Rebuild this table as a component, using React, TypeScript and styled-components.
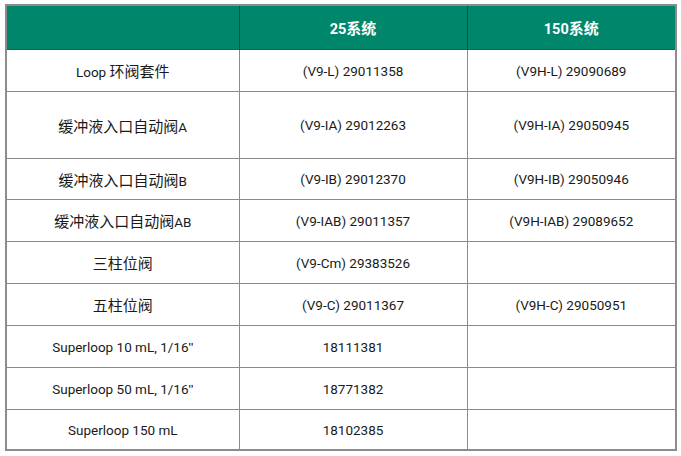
import React from "react";
import styled, { createGlobalStyle } from "styled-components";

const Global = createGlobalStyle`
  html, body { margin: 0; padding: 0; background: #ffffff; }
  body { font-family: Roboto, "Liberation Sans", "Noto Sans CJK SC", sans-serif; }
`;

const Page = styled.div`
  padding: 4px 0 0 5px;
`;

const Table = styled.table`
  border-collapse: collapse;
  table-layout: fixed;
  width: 670px;
  border: 2px solid #8c8c8c;
  color: #1a1a1a;
  font-family: Roboto, "Liberation Sans", "Noto Sans CJK SC", sans-serif;
  font-size: 13.5px;
`;

const HeadCell = styled.th`
  background: #00866a;
  color: #ffffff;
  font-weight: 700;
  font-size: 14.5px;
  text-align: center;
  vertical-align: middle;
  padding: 0;
  border-top: 2px solid #8c8c8c;
  border-bottom: 1.5px solid #2f5a4c;
  & + & { border-left: 1.5px solid #24463b; }
`;

const Row = styled.tr<{ $h: number }>`
  height: ${(p) => p.$h}px;
`;

const Cell = styled.td`
  text-align: center;
  vertical-align: middle;
  padding: 1px 0 0 0;
  border: 1.5px solid #8a8a8a;
  white-space: nowrap;
`;

const Zh = styled.span`
  font-family: "Noto Sans CJK SC", sans-serif;
  font-size: 15px;
`;

const Num = styled.span`
  font-family: Roboto, "Liberation Sans", sans-serif;
`;

const Quote = styled.span`
  font-family: "Liberation Sans", sans-serif;
`;

type RowData = { h: number; name: React.ReactNode; a: string; b: string };

const rows: RowData[] = [
  { h: 42, name: <>Loop <Zh>环阀套件</Zh></>, a: "(V9-L) 29011358", b: "(V9H-L) 29090689" },
  { h: 67, name: <><Zh>缓冲液入口自动阀</Zh>A</>, a: "(V9-IA) 29012263", b: "(V9H-IA) 29050945" },
  { h: 41, name: <><Zh>缓冲液入口自动阀</Zh>B</>, a: "(V9-IB) 29012370", b: "(V9H-IB) 29050946" },
  { h: 42, name: <><Zh>缓冲液入口自动阀</Zh>AB</>, a: "(V9-IAB) 29011357", b: "(V9H-IAB) 29089652" },
  { h: 42, name: <Zh>三柱位阀</Zh>, a: "(V9-Cm) 29383526", b: "" },
  { h: 42, name: <Zh>五柱位阀</Zh>, a: "(V9-C) 29011367", b: "(V9H-C) 29050951" },
  { h: 42, name: <>Superloop 10 mL, 1/16<Quote>"</Quote></>, a: "18111381", b: "" },
  { h: 42, name: <>Superloop 50 mL, 1/16<Quote>"</Quote></>, a: "18771382", b: "" },
  { h: 41, name: "Superloop 150 mL", a: "18102385", b: "" },
];

export default function App() {
  return (
    <>
      <Global />
      <Page>
        <Table>
          <colgroup>
            <col style={{ width: 233 }} />
            <col style={{ width: 228 }} />
            <col style={{ width: 209 }} />
          </colgroup>
          <thead>
            <Row $h={44}>
              <HeadCell></HeadCell>
              <HeadCell><Num>25</Num><Zh>系统</Zh></HeadCell>
              <HeadCell><Num>150</Num><Zh>系统</Zh></HeadCell>
            </Row>
          </thead>
          <tbody>
            {rows.map((r, i) => (
              <Row key={i} $h={r.h}>
                <Cell>{r.name}</Cell>
                <Cell>{r.a}</Cell>
                <Cell>{r.b}</Cell>
              </Row>
            ))}
          </tbody>
        </Table>
      </Page>
    </>
  );
}
